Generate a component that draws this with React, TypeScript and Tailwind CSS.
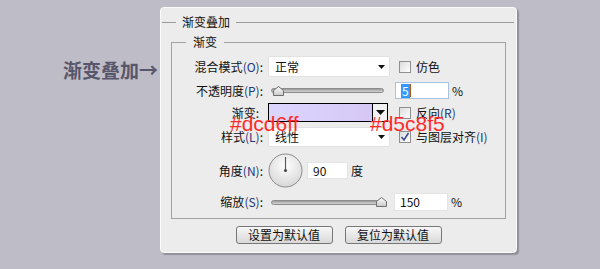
import React from "react"

const FONT = { fontFamily: '"Noto Sans CJK SC", "Noto Sans", sans-serif' }

const Arrow = () => (
  <svg width="7" height="4" viewBox="0 0 7 4">
    <polygon points="0,0 7,0 3.5,4" fill="#111" />
  </svg>
)

const Key = ({ k }: { k: string }) => <span className="text-[#23367a]">({k})</span>

const Label = ({ children, pr = "pr-0" }: { children: React.ReactNode; pr?: string }) => (
  <div className={`w-[91px] shrink-0 text-right whitespace-nowrap ${pr}`}>{children}</div>
)

const Select = ({ value }: { value: string }) => (
  <div className="ml-[5px] w-[122px] h-full bg-white border border-[#e2e2e2] rounded-[2px] flex items-center pl-[6px] pr-[4px]">
    <span className="flex-1">{value}</span>
    <Arrow />
  </div>
)

const Check = ({ checked, children }: { checked?: boolean; children: React.ReactNode }) => (
  <div className="ml-[9px] flex items-center gap-[5px] whitespace-nowrap">
    <div className="w-[12px] h-[12px] border border-[#8f8f8f] bg-gradient-to-br from-[#dcdcdc] to-white flex items-center justify-center">
      {checked && (
        <svg width="10" height="10" viewBox="0 0 10 10">
          <path d="M1.5 5 L4 8 L8.5 1" fill="none" stroke="#3d4d8e" strokeWidth="1.6" />
        </svg>
      )}
    </div>
    <span>{children}</span>
  </div>
)

const Slider = ({ at }: { at: number }) => (
  <div className="ml-[8px] w-[113px] relative h-full flex items-center">
    <div className="w-full h-[5px] rounded-full border border-[#8c8c8c] bg-gradient-to-b from-[#9a9a9a] to-[#d6d6d6]" />
    <svg className="absolute top-[4px]" style={{ left: at }} width="11" height="10" viewBox="0 0 11 10">
      <defs>
        <linearGradient id={`th${at}`} x1="0" y1="0" x2="0" y2="1">
          <stop offset="0" stopColor="#ffffff" />
          <stop offset="1" stopColor="#c8c8c8" />
        </linearGradient>
      </defs>
      <polygon points="0.5,9.5 0.5,4.5 5.5,0.5 10.5,4.5 10.5,9.5" fill={`url(#th${at})`} stroke="#6f6f6f" />
    </svg>
  </div>
)

const Num = ({ children, w, focus }: { children: React.ReactNode; w: string; focus?: boolean }) => (
  <div className={`${w} h-full bg-white border ${focus ? "border-[#a9c2dd]" : "border-[#e4e4e4]"} flex items-center pl-[5px]`}>
    {children}
  </div>
)

export default function App() {
  return (
    <div className="w-[600px] h-[269px] bg-[#bebcc7] flex pl-[63px] pt-[7px] text-[12px] leading-[16px] text-[#111]" style={FONT}>
      <div className="w-[97px] mt-[52px] h-[22px] text-[19px] leading-[22px] font-bold text-[#58566a] whitespace-nowrap">渐变叠加→</div>

      <div className="relative w-[357px] h-[246px] bg-[#ececec] border border-[#fbfbfb] rounded-[4px] shadow-[2px_2px_1px_rgba(110,108,118,0.55)]">
        <div className="mt-[6px] flex items-center h-[16px] pl-[1px] pr-[2px]">
          <div className="w-[14px] h-px bg-[#9a9a9a]" />
          <span className="px-[6px]">渐变叠加</span>
          <div className="flex-1 h-px bg-[#9a9a9a]" />
        </div>

        <fieldset className="mt-[4px] mx-[10px] border border-[#a2a2a2] pb-[7px]">
          <legend className="ml-[14px] px-[7px] leading-[16px]">渐变</legend>

          <div className="mt-[6px] h-[21px] flex items-center">
            <Label>混合模式<Key k="O" />:</Label>
            <Select value="正常" />
            <Check>仿色</Check>
          </div>

          <div className="mt-[5px] h-[17px] flex items-center">
            <Label>不透明度<Key k="P" />:</Label>
            <Slider at={2} />
            <div className="ml-[11px] flex items-center h-full">
              <Num w="w-[54px]" focus>
                <span className="bg-[#3399ff] text-white leading-[14px] px-px">5</span>
                <span className="w-px h-[13px] bg-[#b05a1a]" />
              </Num>
              <span className="ml-[3px]">%</span>
            </div>
          </div>

          <div className="mt-[4px] h-[19px] flex items-center">
            <Label pr="pr-[4px]">渐变:</Label>
            <div className="ml-[5px] w-[120px] h-full border border-black flex">
              <div className="flex-1 bg-gradient-to-r from-[#dcd6ff] to-[#d5c8f5]" />
              <div className="w-[15px] border-l border-black bg-[#f2f2f2] flex items-center justify-center">
                <svg width="9" height="5" viewBox="0 0 9 5">
                  <polygon points="0,0 9,0 4.5,5" fill="#111" />
                </svg>
              </div>
            </div>
            <div className="ml-[2px]">
              <Check>反向<Key k="R" /></Check>
            </div>
          </div>

          <div className="mt-[5px] h-[20px] flex items-center">
            <Label>样式<Key k="L" />:</Label>
            <Select value="线性" />
            <Check checked>与图层对齐<Key k="I" /></Check>
          </div>

          <div className="mt-[6px] h-[35px] flex items-center">
            <Label>角度<Key k="N" />:</Label>
            <svg className="ml-[5px]" width="35" height="35" viewBox="0 0 35 35">
              <defs>
                <radialGradient id="dial" cx="0.5" cy="0.35" r="0.7">
                  <stop offset="0" stopColor="#ffffff" />
                  <stop offset="1" stopColor="#d4d4d4" />
                </radialGradient>
              </defs>
              <circle cx="17.5" cy="17.5" r="16.5" fill="url(#dial)" stroke="#8a8a8a" />
              <line x1="17.5" y1="17.5" x2="17.5" y2="4" stroke="#5a5a5a" strokeWidth="1.2" />
              <circle cx="17.5" cy="17.5" r="1.6" fill="#4a4a4a" />
            </svg>
            <div className="ml-[4px] h-[17px] flex items-center">
              <Num w="w-[41px]">90</Num>
              <span className="ml-[3px]">度</span>
            </div>
          </div>

          <div className="mt-[5px] h-[18px] flex items-center">
            <Label>缩放<Key k="S" />:</Label>
            <Slider at={105} />
            <div className="ml-[10px] flex items-center h-full">
              <Num w="w-[54px]">150</Num>
              <span className="ml-[3px]">%</span>
            </div>
          </div>
        </fieldset>

        <div className="mt-[7px] flex justify-center gap-[12px]">
          {["设置为默认值", "复位为默认值"].map((t) => (
            <button key={t} className="w-[97px] h-[18px] border border-[#777] rounded-[3px] bg-gradient-to-b from-[#f7f7f7] to-[#d9d9d9] text-[12px] leading-[16px]">
              {t}
            </button>
          ))}
        </div>

        <span className="absolute left-[69px] top-[105px] text-[21px] leading-[21px] text-[#ff2b2b]" style={{ fontFamily: '"Liberation Sans", Arial, sans-serif' }}>#dcd6ff</span>
        <span className="absolute left-[209px] top-[105px] text-[21px] leading-[21px] text-[#ff2b2b]" style={{ fontFamily: '"Liberation Sans", Arial, sans-serif' }}>#d5c8f5</span>
      </div>
    </div>
  )
}
